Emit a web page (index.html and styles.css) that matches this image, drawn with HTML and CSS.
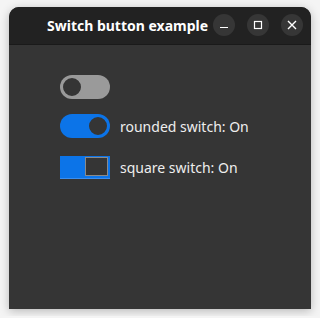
FILE: index.html
```html
<!DOCTYPE html>
<html>
<head>
  <title>Switch button example</title>
  <meta charset="utf-8">
  <link rel="stylesheet" href="styles.css">
</head>
<body>
  <div class="window">
    <div class="titlebar">
      <div class="title">Switch button example</div>
      <div class="buttons">
        <div class="btn">
          <svg width="10" height="10" viewBox="0 0 10 10"><path d="M1 7.5h8" stroke="#fff" stroke-width="1.2"/></svg>
        </div>
        <div class="btn">
          <svg width="10" height="10" viewBox="0 0 10 10"><rect x="1.5" y="1.5" width="7" height="7" fill="none" stroke="#fff" stroke-width="1.2"/></svg>
        </div>
        <div class="btn">
          <svg width="10" height="10" viewBox="0 0 10 10"><path d="M1 1l8 8M9 1l-8 8" stroke="#fff" stroke-width="1.4"/></svg>
        </div>
      </div>
    </div>
    <div class="content">
      <div class="row">
        <div class="switch round"><div class="knob"></div></div>
      </div>
      <div class="row">
        <div class="switch round on"><div class="knob"></div></div>
        <span class="label">rounded switch: On</span>
      </div>
      <div class="row">
        <div class="switch square on"><div class="knob"></div></div>
        <span class="label">square switch: On</span>
      </div>
    </div>
  </div>
</body>
</html>
```

FILE: styles.css
```css
body {
  margin: 0;
  background-color: #f4f4f4;
  font-family: "Noto Sans", "DejaVu Sans", sans-serif;
}

.window {
  width: 302px;
  height: 302px;
  margin: 7px 9px;
  border-radius: 10px 10px 0 0;
  overflow: hidden;
  background-color: #353535;
  box-shadow: 0 2px 10px rgba(0, 0, 0, 0.25);
  display: flex;
  flex-direction: column;
}

.titlebar {
  height: 37px;
  flex-shrink: 0;
  background-color: #222222;
  border-bottom: 1px solid #1a1a1a;
  display: flex;
  align-items: center;
}

.title {
  width: 166px;
  margin-left: 38px;
  color: #ffffff;
  font-weight: bold;
  font-size: 14px;
  white-space: nowrap;
}

.buttons {
  display: flex;
  gap: 12px;
  margin-top: -1px;
}

.btn {
  width: 22px;
  height: 22px;
  border-radius: 50%;
  background-color: #363636;
  display: flex;
  align-items: center;
  justify-content: center;
}

.content {
  padding: 30px 0 0 51px;
  display: flex;
  flex-direction: column;
}

.row {
  display: flex;
  align-items: center;
  height: 24px;
  margin-bottom: 15px;
}

.row:last-child {
  margin-top: 2px;
}

.label {
  margin-left: 10px;
  color: #eeeeee;
  font-size: 14px;
}

.switch {
  width: 50px;
  height: 24px;
  box-sizing: border-box;
  display: flex;
  align-items: center;
  background-color: #9a9a9a;
}

.switch .knob {
  box-sizing: border-box;
  background-color: #353535;
}

.switch.round {
  border-radius: 12px;
  padding: 0 1px;
}

.switch.round .knob {
  width: 22px;
  height: 22px;
  border-radius: 50%;
  border: 2px solid #9a9a9a;
}

.switch.on {
  background-color: #0c74e8;
  justify-content: flex-end;
}

.switch.round.on .knob {
  border-color: #0c74e8;
}

.switch.square {
  height: 23px;
  padding: 1px 2px 3px 0;
  border-bottom: 1px solid #3a8ef0;
  align-items: flex-start;
}

.switch.square .knob {
  width: 23px;
  height: 19px;
  border: 1px solid #8a8a8a;
}
```
